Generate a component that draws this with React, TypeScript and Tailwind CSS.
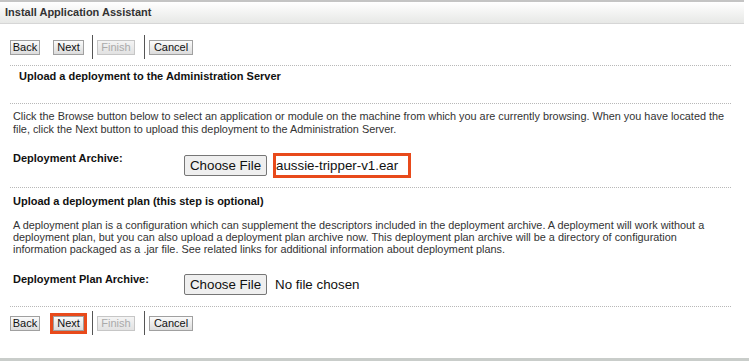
import React from "react";

const font = { fontFamily: '"Liberation Sans", Arial, sans-serif' };

function NavButton({ label, width, disabled }: { label: string; width: string; disabled?: boolean }) {
  return (
    <button
      className={
        disabled
          ? `${width} h-[15px] text-[11px] leading-none text-[#aaa] border border-[#c6c6c6] bg-gradient-to-b from-[#f4f4f4] to-[#e2e2e2]`
          : `${width} h-[15px] text-[11px] leading-none text-[#111] border border-[#a0a0a0] bg-gradient-to-b from-[#fbfbfb] to-[#dcdcdc]`
      }
    >
      {label}
    </button>
  );
}

function Separator({ className }: { className: string }) {
  return <div className={`w-px h-[24px] bg-[#555] ${className}`} />;
}

function ButtonBar({ markNext }: { markNext?: boolean }) {
  return (
    <div className="flex items-center h-[24px]">
      <NavButton label="Back" width="w-[30px]" />
      {markNext ? (
        <div className="ml-[10px] border-[3px] border-[#e84a1b] flex">
          <NavButton label="Next" width="w-[31px]" />
        </div>
      ) : (
        <div className="ml-[13px] flex">
          <NavButton label="Next" width="w-[31px]" />
        </div>
      )}
      <Separator className={markNext ? "ml-[5px]" : "ml-[8px]"} />
      <div className="ml-[4px] flex">
        <NavButton label="Finish" width="w-[38px]" disabled />
      </div>
      <Separator className="ml-[9px]" />
      <div className="ml-[4px] flex">
        <NavButton label="Cancel" width="w-[44px]" />
      </div>
    </div>
  );
}

function FileButton() {
  return (
    <button className="w-[83px] h-[21px] text-[13.33px] leading-none text-[#111] bg-[#efefef] border border-[#767676] rounded-[2px]">
      Choose File
    </button>
  );
}

export default function App() {
  return (
    <div className="w-[749px] h-[361px] bg-white flex flex-col text-[#222]" style={font}>
      <div className="h-[24px] border-t-2 border-t-[#c4c4c4] border-b border-b-[#d6d6d6] bg-gradient-to-b from-white to-[#e7e8e6] flex items-center pl-[5px] mr-[5px]">
        <span className="text-[11px] font-bold text-[#333]">Install Application Assistant</span>
      </div>

      <div className="flex-1 pl-[10px] pr-[18px] pt-[11px]">
        <ButtonBar />
        <div className="mt-[6px] border-t border-dotted border-[#b8b8b8]" />
        <div className="h-[37px] pl-[9px] pt-[4px] text-[11px] leading-[13px] font-bold text-[#111]">
          Upload a deployment to the Administration Server
        </div>
        <div className="border-t border-dotted border-[#b8b8b8]" />

        <div className="pl-[3px] pr-[4px] pt-[6px] text-[10.86px] leading-[13px] text-[#333]">
          Click the Browse button below to select an application or module on the machine from which you are currently browsing. When you have located the file, click the Next button to upload this deployment to the Administration Server.
        </div>

        <div className="flex items-start pl-[3px] mt-[16px] h-[35px]">
          <div className="w-[171px] text-[11px] leading-[13px] font-bold text-[#111]">Deployment Archive:</div>
          <div className="flex items-center mt-[1px]">
            <FileButton />
            <div className="ml-[6px] border-[3px] border-[#e84a1b] h-[25px] w-[138px] flex items-center text-[13.33px] text-[#111]">
              aussie-tripper-v1.ear
            </div>
          </div>
        </div>

        <div className="border-t border-dotted border-[#b8b8b8]" />
        <div className="pl-[3px] pt-[7px] text-[11px] leading-[13px] font-bold text-[#111]">
          Upload a deployment plan (this step is optional)
        </div>
        <div className="pl-[3px] pr-[4px] mt-[11px] text-[10.86px] leading-[12px] text-[#333]">
          A deployment plan is a configuration which can supplement the descriptors included in the deployment archive. A deployment will work without a deployment plan, but you can also upload a deployment plan archive now. This deployment plan archive will be a directory of configuration information packaged as a .jar file. See related links for additional information about deployment plans.
        </div>

        <div className="flex items-start pl-[3px] mt-[18px] h-[33px]">
          <div className="w-[171px] text-[11px] leading-[13px] font-bold text-[#111]">Deployment Plan Archive:</div>
          <div className="flex items-center mt-[1px]">
            <FileButton />
            <span className="ml-[8px] text-[13.33px] text-[#111]">No file chosen</span>
          </div>
        </div>

        <div className="border-t border-dotted border-[#b8b8b8]" />
        <div className="pt-[4px]">
          <ButtonBar markNext />
        </div>
      </div>

      <div className="h-[3px] bg-[#c9cdca]" />
    </div>
  );
}
